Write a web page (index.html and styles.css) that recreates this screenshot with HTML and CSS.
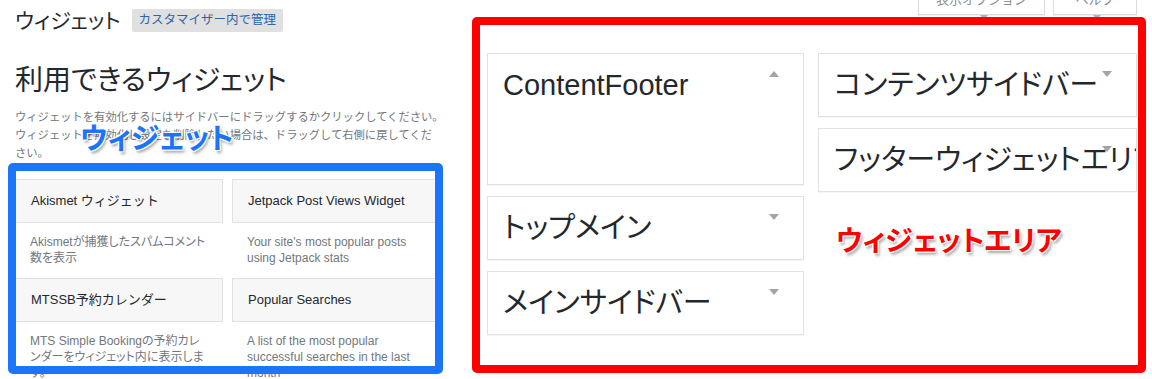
FILE: index.html
```html
<!DOCTYPE html>
<html lang="ja">
<head>
    <meta charset="UTF-8">
    <meta name="viewport" content="width=device-width, initial-scale=1.0">
    <title>ウィジェット</title>
    <link rel="stylesheet" href="styles.css">
</head>
<body>
    <div class="wrap">
        <div class="available">
            <div class="page-head">
                <h1>ウィジェット</h1>
                <a class="page-action" href="#">カスタマイザー内で管理</a>
            </div>
            <h2>利用できるウィジェット</h2>
            <p class="intro"><span class="line">ウィジェットを有効化するにはサイドバーにドラッグするかクリックしてください。</span><br>ウィジェットを無効化し設定を削除したい場合は、ドラッグして右側に戻してください。</p>
            <div class="widget-list">
                <div class="widget">
                    <div class="widget-top">Akismet ウィジェット</div>
                    <div class="widget-desc">Akismetが捕獲したスパムコメント<br>数を表示</div>
                </div>
                <div class="widget">
                    <div class="widget-top">Jetpack Post Views Widget</div>
                    <div class="widget-desc">Your site's most popular posts using Jetpack stats</div>
                </div>
                <div class="widget">
                    <div class="widget-top">MTSSB予約カレンダー</div>
                    <div class="widget-desc">MTS Simple Bookingの予約カレンダーをウィジェット内に表示します。</div>
                </div>
                <div class="widget">
                    <div class="widget-top">Popular Searches</div>
                    <div class="widget-desc">A list of the most popular successful searches in the last month</div>
                </div>
            </div>
        </div>

        <div class="sidebars">
            <div class="screen-meta">
                <button class="meta-btn">表示オプション <span class="caret"></span></button>
                <button class="meta-btn">ヘルプ <span class="caret"></span></button>
            </div>
            <div class="sidebar-grid">
                <div class="sidebar-col">
                    <div class="area open">
                        <div class="area-title">ContentFooter<span class="toggle up"></span></div>
                        <div class="area-body"></div>
                    </div>
                    <div class="area">
                        <div class="area-title">トップメイン<span class="toggle"></span></div>
                    </div>
                    <div class="area">
                        <div class="area-title">メインサイドバー<span class="toggle"></span></div>
                    </div>
                </div>
                <div class="sidebar-col">
                    <div class="area">
                        <div class="area-title">コンテンツサイドバー<span class="toggle"></span></div>
                    </div>
                    <div class="area">
                        <div class="area-title">フッターウィジェットエリア<span class="toggle"></span></div>
                    </div>
                </div>
            </div>
        </div>

        <!-- annotations drawn over the screenshot -->
        <div class="mark mark-blue"></div>
        <div class="mark mark-red"></div>
        <div class="note note-blue">ウィジェット</div>
        <div class="note note-red">ウィジェットエリア</div>
    </div>
</body>
</html>
```

FILE: styles.css
```css
body {
    margin: 0;
    background-color: #fff;
    font-family: "Liberation Sans", "Noto Sans CJK JP", sans-serif;
    color: #23282d;
    overflow: hidden;
}
.wrap {
    position: relative;
    display: flex;
    gap: 47px;
    padding-left: 15px;
    height: 379px;
}
.available {
    width: 425px;
    flex-shrink: 0;
}
.page-head {
    display: flex;
    align-items: center;
    gap: 11px;
    padding-top: 9px;
    height: 23px;
}
h1 {
    margin: 0;
    font-size: 21px;
    font-weight: normal;
    line-height: 23px;
    color: #23282d;
    font-feature-settings: "palt";
}
.page-action {
    display: inline-block;
    background-color: #e0e0e0;
    color: #2a66ad;
    font-size: 12.5px;
    line-height: 23px;
    padding: 0 7px;
    border-radius: 2px;
    text-decoration: none;
}
h2 {
    margin: 34px 0 0;
    font-size: 28px;
    font-weight: normal;
    line-height: 30px;
    color: #23282d;
    font-feature-settings: "palt";
}
.intro {
    margin: 12px 0 0;
    font-size: 11.3px;
    line-height: 18px;
    color: #72777c;
}
.intro .line {
    white-space: nowrap;
}
.widget-list {
    display: grid;
    grid-template-columns: 208px 208px;
    column-gap: 9px;
    margin-top: 17px;
}
.widget {
    height: 99px;
}
.widget-top {
    height: 42px;
    line-height: 42px;
    padding: 0 15px;
    background-color: #f7f7f7;
    border: 1px solid #e2e2e2;
    font-size: 13px;
    color: #23282d;
    white-space: nowrap;
    overflow: hidden;
}
.widget-desc {
    padding: 11px 15px 0;
    font-size: 12px;
    line-height: 16px;
    color: #72777c;
    font-feature-settings: "palt";
}
.sidebars {
    width: 650px;
}
.screen-meta {
    display: flex;
    justify-content: flex-end;
    gap: 8px;
    margin-top: -11px;
}
.meta-btn {
    height: 26px;
    padding: 0 14px 8px;
    background-color: #fff;
    border: 1px solid #ddd;
    border-top: none;
    box-shadow: 0 1px 1px rgba(0, 0, 0, 0.06);
    font-family: inherit;
    font-size: 13px;
    color: #8a8f94;
}
.meta-btn:first-child {
    width: 127px;
}
.meta-btn:last-child {
    width: 84px;
}
.caret {
    display: inline-block;
    border-left: 4px solid transparent;
    border-right: 4px solid transparent;
    border-top: 5px solid #a9b4c4;
    margin-left: 4px;
}
.sidebar-grid {
    display: grid;
    grid-template-columns: 317px 319px;
    column-gap: 14px;
    margin-top: 38px;
}
.sidebar-col {
    display: flex;
    flex-direction: column;
    gap: 11px;
}
.area {
    border: 1px solid #e2e2e2;
    background-color: #fff;
    box-shadow: 0 1px 1px rgba(0, 0, 0, 0.04);
}
.area-title {
    position: relative;
    height: 62px;
    line-height: 62px;
    padding-left: 15px;
    font-size: 29px;
    color: #23282d;
    white-space: nowrap;
    overflow: hidden;
    font-feature-settings: "palt";
}
.area-body {
    height: 68px;
}
.toggle {
    position: absolute;
    top: 17px;
    right: 24px;
    width: 0;
    height: 0;
    border-left: 5px solid transparent;
    border-right: 5px solid transparent;
    border-top: 6px solid #a0a5aa;
}
.toggle.up {
    border-top: none;
    border-bottom: 6px solid #a0a5aa;
}
.mark {
    position: absolute;
    box-sizing: border-box;
    border-radius: 5px;
}
.mark-blue {
    left: 8px;
    top: 163px;
    width: 435px;
    height: 211px;
    border: 8px solid #1a75fb;
}
.mark-red {
    left: 472px;
    top: 17px;
    width: 674px;
    height: 356px;
    border: 8px solid #ff0000;
}
.note {
    position: absolute;
    font-weight: bold;
    white-space: nowrap;
    font-feature-settings: "palt";
    text-shadow: -1px -1px 0 #fff, 1px -1px 0 #fff, -1px 1px 0 #fff, 1px 1px 0 #fff, 2px 3px 3px rgba(0, 0, 0, 0.35);
}
.note-blue {
    left: 80px;
    top: 115px;
    font-size: 29px;
    color: #1a75fb;
}
.note-red {
    left: 836px;
    top: 219px;
    font-size: 28px;
    color: #ff0000;
}
```
